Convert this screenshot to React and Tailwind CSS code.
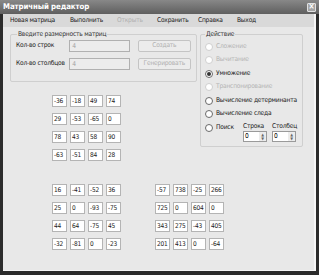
import React from "react";

const m1 = [
  ["-36", "-18", "49", "74"],
  ["29", "-53", "-65", "0"],
  ["78", "43", "58", "90"],
  ["-63", "-51", "84", "28"],
];
const m2 = [
  ["16", "-41", "-52", "36"],
  ["25", "0", "-93", "-75"],
  ["44", "64", "-75", "45"],
  ["-32", "-81", "0", "-23"],
];
const m3 = [
  ["-57", "738", "-25", "266"],
  ["725", "0", "604", "0"],
  ["343", "275", "-43", "405"],
  ["201", "413", "0", "-64"],
];

const Matrix = ({ data }) => (
  <div className="flex flex-col gap-[6px]">
    {data.map((row, i) => (
      <div key={i} className="flex gap-[3px]">
        {row.map((v, j) => (
          <div
            key={j}
            className="w-[15px] h-[12px] border border-[#b4b4b4] bg-white text-[6.5px] leading-[10px] pl-[1px] text-[#222] overflow-hidden whitespace-nowrap"
          >
            {v}
          </div>
        ))}
      </div>
    ))}
  </div>
);

const Radio = ({ label, checked, disabled }) => (
  <div className="flex items-center h-[13.5px] gap-[3px] whitespace-nowrap">
    <div
      className={
        "w-[8px] h-[8px] shrink-0 rounded-full border flex items-center justify-center bg-white " +
        (disabled ? "border-[#cfcfcf]" : "border-[#6a6a6a]")
      }
    >
      {checked && <div className="w-[4px] h-[4px] rounded-full bg-[#333]" />}
    </div>
    <span className={disabled ? "text-[#b4b4b4]" : "text-[#1a1a1a]"}>{label}</span>
  </div>
);

const Spinner = () => (
  <div className="w-[24px] h-[11px] border border-[#9a9a9a] bg-white flex items-center justify-between">
    <span className="pl-[1px] leading-none">0</span>
    <div className="w-[7px] h-full flex flex-col items-center justify-center bg-[#ececec] text-[4px] leading-[4px] text-[#666]">
      <span>▲</span>
      <span>▼</span>
    </div>
  </div>
);

export default function App() {
  return (
    <div
      className="w-[319px] h-[275px] bg-[#2b2b2b] flex flex-col text-[6.6px] tracking-[-0.2px]"
      style={{ fontFamily: '"DejaVu Sans Condensed", "Liberation Sans Narrow", Arial, sans-serif' }}
    >
      <div className="h-[14px] bg-gradient-to-b from-[#888] to-[#5f5f5f] flex items-center justify-between pl-[3px] pr-[3px]">
        <span className="text-white font-bold text-[7.8px] tracking-[-0.1px]">Матричный редактор</span>
        <div className="w-[9px] h-[9px] bg-[#a5a5a5] border border-[#e0e0e0] rounded-[1px] flex items-center justify-center text-white text-[8px] leading-none font-bold">
          ×
        </div>
      </div>
      <div className="flex-1 mx-[3px] mb-[4px] bg-[#e8e8e8] border-r-2 border-b border-[#f6f6f6] flex flex-col">
        <div className="h-[13px] bg-[#d9d9d9] flex items-center text-[#1a1a1a] whitespace-nowrap">
          <span className="ml-[7px] w-[60px]">Новая матрица</span>
          <span className="w-[47px]">Выполнить</span>
          <span className="w-[40px] text-[#b0b0b0]">Открыть</span>
          <span className="w-[41px]">Сохранить</span>
          <span className="w-[39px]">Справка</span>
          <span>Выход</span>
        </div>
        <div className="pl-[7px] pt-[7px] flex flex-col">
          <div className="flex gap-[3px] items-start">
            <div className="w-[187px] flex flex-col">
              <div className="relative h-[48px] border border-[#cfcfcf] rounded-[2px] px-[5px] pt-[5px] flex flex-col gap-[6px] whitespace-nowrap">
                <span className="absolute -top-[5px] left-[6px] px-[1px] bg-[#e8e8e8] text-[#333] leading-[8px]">
                  Введите размерность матриц
                </span>
                <div className="flex items-center">
                  <span className="w-[54px] text-[#1a1a1a]">Кол-во строк</span>
                  <div className="w-[61px] h-[12px] border border-[#b0b0b0] bg-[#ececec] text-[#a0a0a0] pl-[2px] leading-[10px]">4</div>
                  <div className="ml-[8px] w-[54px] h-[12px] border border-[#c4c4c4] rounded-[2px] bg-[#ececec] text-[#b0b0b0] flex items-center justify-center">Создать</div>
                </div>
                <div className="flex items-center">
                  <span className="w-[54px] text-[#1a1a1a]">Кол-во столбцов</span>
                  <div className="w-[61px] h-[12px] border border-[#b0b0b0] bg-[#ececec] text-[#a0a0a0] pl-[2px] leading-[10px]">4</div>
                  <div className="ml-[8px] w-[54px] h-[12px] border border-[#c4c4c4] rounded-[2px] bg-[#ececec] text-[#b0b0b0] flex items-center justify-center">Генерировать</div>
                </div>
              </div>
              <div className="ml-[42px] mt-[13px]">
                <Matrix data={m1} />
              </div>
            </div>
            <div className="relative w-[103px] h-[113px] border border-[#cfcfcf] rounded-[2px] pl-[4px] pt-[5px] flex flex-col">
              <span className="absolute -top-[5px] left-[4px] px-[1px] bg-[#e8e8e8] text-[#333] leading-[8px]">
                Действие
              </span>
              <Radio label="Сложение" disabled />
              <Radio label="Вычитание" disabled />
              <Radio label="Умножение" checked />
              <Radio label="Транспонирование" disabled />
              <Radio label="Вычисление детерминанта" />
              <Radio label="Вычисление следа" />
              <div className="flex items-start">
                <div className="w-[38px]">
                  <Radio label="Поиск" />
                </div>
                <div className="flex flex-col mt-[1px] gap-[1px]">
                  <span className="text-[#1a1a1a] leading-[8px]">Строка</span>
                  <Spinner />
                </div>
                <div className="flex flex-col mt-[1px] gap-[1px] ml-[5px]">
                  <span className="text-[#1a1a1a] leading-[8px]">Столбец</span>
                  <Spinner />
                </div>
              </div>
            </div>
          </div>
          <div className="flex mt-[23px] ml-[42px] gap-[34px]">
            <Matrix data={m2} />
            <Matrix data={m3} />
          </div>
        </div>
      </div>
    </div>
  );
}
